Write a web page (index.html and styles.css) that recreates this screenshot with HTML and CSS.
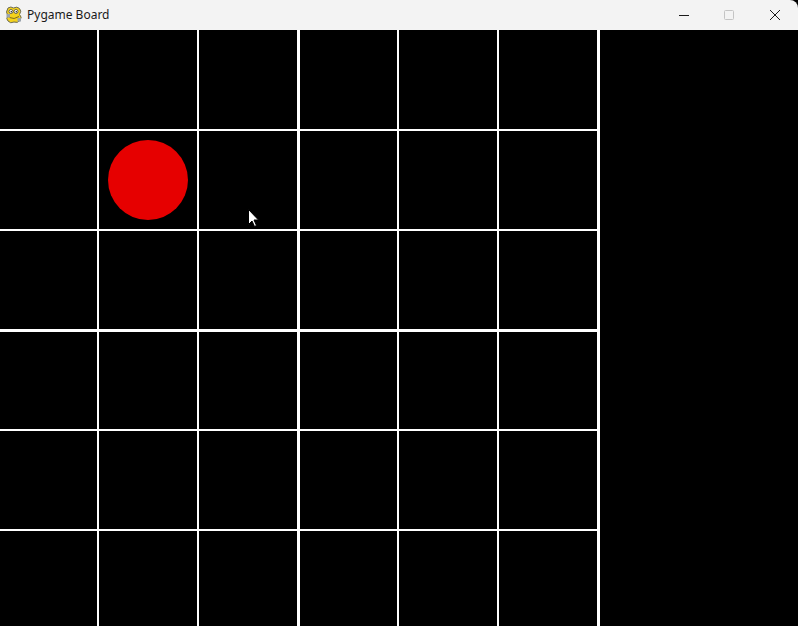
FILE: index.html
```html
<!DOCTYPE html>
<html>
<head>
<meta charset="utf-8">
<title>Pygame Board</title>
<link rel="stylesheet" href="styles.css">
</head>
<body>
<div class="window">
  <div class="titlebar">
    <div class="title-left">
      <svg class="app-icon" width="18" height="18" viewBox="0 0 18 18">
        <path d="M3 2 Q6 0 8.5 2 Q12 0 14.5 2.5 Q17 5 14.5 8.5 Q17.5 11 15 14.5 Q12.5 17.5 9 16 Q5.5 18 3 15 Q0.5 12.5 3 10 Q0 6 3 2 Z" fill="#f4d21c" stroke="#6b6b5a" stroke-width="1"/>
        <circle cx="6" cy="5.5" r="2" fill="#fff" stroke="#333" stroke-width="0.7"/>
        <circle cx="11" cy="5.5" r="2" fill="#fff" stroke="#333" stroke-width="0.7"/>
        <circle cx="6.3" cy="5.8" r="0.8" fill="#222"/>
        <circle cx="11.3" cy="5.8" r="0.8" fill="#222"/>
        <path d="M4.5 11.5 Q9 14 14 10.5" fill="none" stroke="#7a6a20" stroke-width="1"/>
        <rect x="1.5" y="8" width="3.5" height="3.5" fill="#9aa3ad"/>
        <rect x="12.5" y="12" width="3.5" height="3.5" fill="#9aa3ad"/>
      </svg>
      <span class="title-text">Pygame Board</span>
    </div>
    <div class="controls">
      <div class="ctrl">
        <svg width="12" height="12" viewBox="0 0 12 12"><path d="M1 6.5 H11" stroke="#1a1a1a" stroke-width="1"/></svg>
      </div>
      <div class="ctrl">
        <svg width="12" height="12" viewBox="0 0 12 12"><rect x="1.5" y="1.5" width="9" height="9" rx="1" fill="none" stroke="#c4c4c4" stroke-width="1"/></svg>
      </div>
      <div class="ctrl">
        <svg width="12" height="12" viewBox="0 0 12 12"><path d="M1 1 L11 11 M11 1 L1 11" stroke="#1a1a1a" stroke-width="1"/></svg>
      </div>
    </div>
  </div>
  <div class="canvas">
    <div class="board">
      <div class="cell"></div><div class="cell"></div><div class="cell"></div><div class="cell mid-col"></div><div class="cell"></div><div class="cell"></div>
      <div class="cell"></div><div class="cell"><div class="piece"></div></div><div class="cell"></div><div class="cell mid-col"></div><div class="cell"></div><div class="cell"></div>
      <div class="cell"></div><div class="cell"></div><div class="cell"></div><div class="cell mid-col"></div><div class="cell"></div><div class="cell"></div>
      <div class="cell mid-row"></div><div class="cell mid-row"></div><div class="cell mid-row"></div><div class="cell mid-row mid-col"></div><div class="cell mid-row"></div><div class="cell mid-row"></div>
      <div class="cell"></div><div class="cell"></div><div class="cell"></div><div class="cell mid-col"></div><div class="cell"></div><div class="cell"></div>
      <div class="cell"></div><div class="cell"></div><div class="cell"></div><div class="cell mid-col"></div><div class="cell"></div><div class="cell"></div>
    </div>
    <svg class="cursor" width="12" height="19" viewBox="0 0 12 19">
      <path d="M0.5 0.5 V15.5 L4 12 L6.5 17.5 L8.5 16.5 L6 11 H10.5 Z" fill="#fff" stroke="#000" stroke-width="1"/>
    </svg>
  </div>
</div>
</body>
</html>
```
FILE: styles.css
```css
* { box-sizing: border-box; }
html, body {
  margin: 0;
  padding: 0;
  width: 798px;
  height: 626px;
  overflow: hidden;
  background: #000;
}
.window {
  width: 798px;
  height: 626px;
  display: flex;
  flex-direction: column;
}
.titlebar {
  height: 30px;
  flex: 0 0 30px;
  background: #f3f3f3;
  display: flex;
  justify-content: space-between;
  align-items: center;
  border-top-right-radius: 8px;
}
.title-left {
  display: flex;
  align-items: center;
  padding-left: 5px;
  gap: 4px;
}
.app-icon { display: block; }
.title-text {
  font-family: "Noto Sans", "Open Sans", sans-serif;
  font-size: 12px;
  color: #1a1a1a;
  line-height: 30px;
}
.controls {
  display: flex;
  height: 30px;
}
.ctrl {
  width: 46px;
  height: 30px;
  display: flex;
  align-items: center;
  justify-content: center;
}
.controls .ctrl:first-child { width: 45px; }
.canvas {
  position: relative;
  flex: 1;
  background: #000;
  overflow: hidden;
}
.board {
  width: 600px;
  display: grid;
  grid-template-columns: 97px 98px 98px 98px 98px 98px;
  grid-template-rows: 99px 98px 98px 98px 98px 98px;
  gap: 2px;
  background: #fff;
  border-right: 3px solid #fff;
}
.cell {
  background: #000;
  display: flex;
  align-items: center;
  justify-content: center;
}
.mid-col { border-left: 1px solid #fff; }
.mid-row { border-top: 1px solid #fff; }
.piece {
  width: 80px;
  height: 80px;
  border-radius: 50%;
  background: #e60000;
}
.cursor {
  position: absolute;
  left: 248px;
  top: 179px;
}
```
